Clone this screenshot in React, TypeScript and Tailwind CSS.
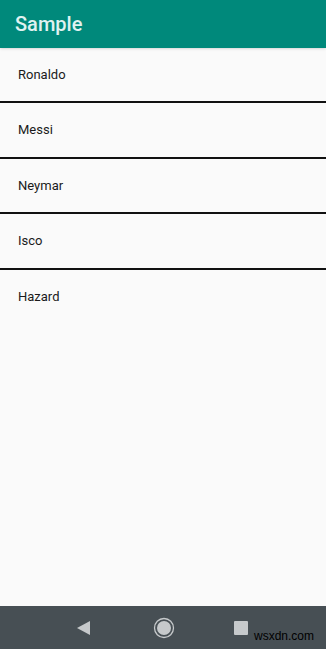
import { useState } from 'react';

const players = ['Ronaldo', 'Messi', 'Neymar', 'Isco', 'Hazard'];

export default function App() {
  const [selected, setSelected] = useState<string | null>(null);

  return (
    <div
      className="flex h-[649px] w-[326px] flex-col bg-[#fafafa]"
      style={{ fontFamily: 'Roboto, "Noto Sans", sans-serif' }}
    >
      {/* Toolbar */}
      <div className="flex h-[48px] shrink-0 items-center bg-[#00897b] px-[15px] shadow-sm">
        <h1 className="text-[20px] font-medium text-[#e0f2f1]">Sample</h1>
      </div>

      {/* List */}
      <ul className="flex-1">
        {players.map((name, i) => (
          <li
            key={name}
            onClick={() => setSelected(name)}
            className={`flex h-[53.4px] items-center px-[18px] text-[13px] text-[#1a1a1a] ${
              i < players.length - 1 ? 'box-content border-b-2 border-[#111]' : ''
            } ${selected === name ? 'bg-[#eeeeee]' : ''}`}
          >
            {name}
          </li>
        ))}
      </ul>

      {/* Navigation bar */}
      <div className="relative flex h-[43px] shrink-0 items-center bg-[#474f54]">
        <div className="flex w-full items-center">
          <svg className="ml-[77px] h-[14px] w-[13px]" viewBox="0 0 13 14">
            <polygon points="13,0 13,14 0,7" fill="#c6c9cb" />
          </svg>
          <svg className="ml-[63px] h-[22px] w-[22px]" viewBox="0 0 22 22">
            <circle cx="11" cy="11" r="9.5" fill="none" stroke="#c6c9cb" strokeWidth="1.3" />
            <circle cx="11" cy="11" r="7" fill="#c6c9cb" />
          </svg>
          <div className="ml-[59px] h-[14px] w-[14px] rounded-[1px] bg-[#c6c9cb]" />
        </div>
        <span
          className="absolute bottom-[4px] right-[12px] text-[12px] text-black"
          style={{ fontFamily: '"Liberation Sans", Arial, sans-serif' }}
        >
          wsxdn.com
        </span>
      </div>
    </div>
  );
}
